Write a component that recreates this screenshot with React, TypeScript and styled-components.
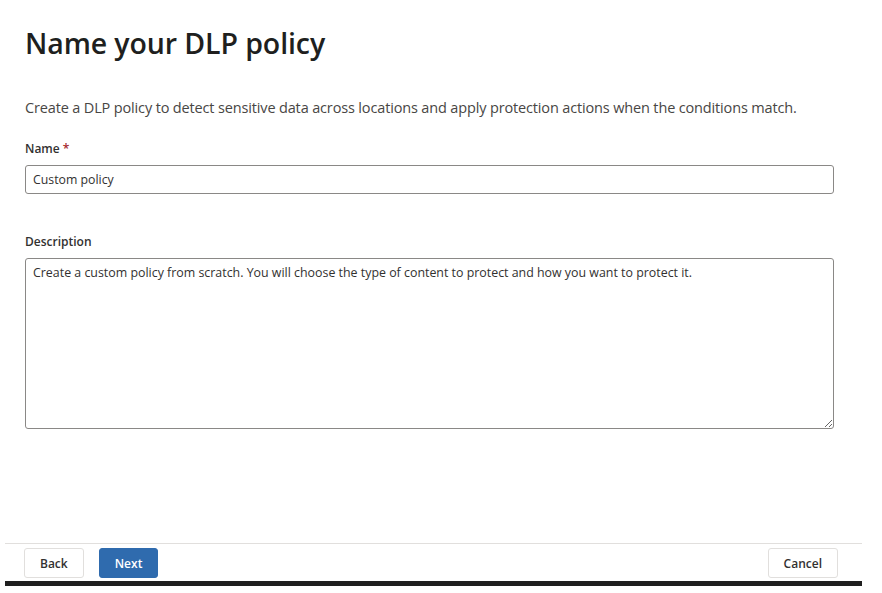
import React from "react";
import styled, { createGlobalStyle } from "styled-components";

const Global = createGlobalStyle`
  html, body { margin: 0; padding: 0; background: #ffffff; }
  body { font-family: "Open Sans", "Noto Sans", sans-serif; color: #323130; }
  * { box-sizing: border-box; }
`;

const Page = styled.div`
  width: 882px;
  height: 593px;
  display: flex;
  flex-direction: column;
  background: #fff;
  overflow: hidden;
`;

const Main = styled.main`
  flex: 1;
  padding: 21px 48px 0 25px;
  display: flex;
  flex-direction: column;
`;

const Title = styled.h1`
  margin: 0;
  font-size: 28.5px;
  line-height: 44px;
  font-weight: 600;
  color: #201f1e;
  letter-spacing: -0.1px;
`;

const Intro = styled.p`
  margin: 33px 0 0;
  font-size: 14.5px;
  line-height: 20px;
  color: #484644;
  letter-spacing: -0.15px;
`;

const Field = styled.div<{ $top: number }>`
  margin-top: ${(p) => p.$top}px;
  display: flex;
  flex-direction: column;
`;

const Label = styled.label`
  font-size: 12px;
  line-height: 16px;
  font-weight: 600;
  color: #323130;
  margin-bottom: 8px;
`;

const Required = styled.span`
  color: #a4262c;
  margin-left: 3px;
`;

const TextInput = styled.input`
  height: 29px;
  width: 100%;
  border: 1px solid #8a8886;
  border-radius: 3px;
  padding: 0 7px;
  font-family: inherit;
  font-size: 12.3px;
  color: #323130;
  outline: none;
`;

const TextArea = styled.textarea`
  height: 171px;
  width: 100%;
  border: 1px solid #8a8886;
  border-radius: 3px;
  padding: 5px 7px;
  font-family: inherit;
  font-size: 12.4px;
  line-height: 17px;
  color: #323130;
  outline: none;
  resize: vertical;
`;

const Footer = styled.footer`
  margin: 0 20px 0 5px;
  border-top: 1px solid #e1dfdd;
  padding: 4px 24px 3px 19px;
  display: flex;
  align-items: center;
  gap: 15px;
`;

const Spacer = styled.div`
  flex: 1;
`;

const Button = styled.button<{ $primary?: boolean }>`
  height: 30px;
  padding: 0 15px;
  border-radius: 3px;
  border: 1px solid ${(p) => (p.$primary ? "#2f6bae" : "#e1dfdd")};
  background: ${(p) => (p.$primary ? "#2f6bae" : "#ffffff")};
  color: ${(p) => (p.$primary ? "#ffffff" : "#323130")};
  font-family: inherit;
  font-size: 12px;
  font-weight: 600;
  cursor: pointer;
`;

const BottomBar = styled.div`
  margin: 0 20px 0 5px;
  height: 5px;
  background: #1f1f1f;
`;

const Tail = styled.div`
  height: 7px;
`;

export default function App() {
  return (
    <>
      <Global />
      <Page>
        <Main>
          <Title>Name your DLP policy</Title>
          <Intro>
            Create a DLP policy to detect sensitive data across locations and apply protection actions when the
            conditions match.
          </Intro>
          <Field $top={23}>
            <Label>
              Name<Required>*</Required>
            </Label>
            <TextInput defaultValue="Custom policy" />
          </Field>
          <Field $top={40}>
            <Label>Description</Label>
            <TextArea defaultValue="Create a custom policy from scratch. You will choose the type of content to protect and how you want to protect it." />
          </Field>
        </Main>
        <Footer>
          <Button>Back</Button>
          <Button $primary>Next</Button>
          <Spacer />
          <Button>Cancel</Button>
        </Footer>
        <BottomBar />
        <Tail />
      </Page>
    </>
  );
}
